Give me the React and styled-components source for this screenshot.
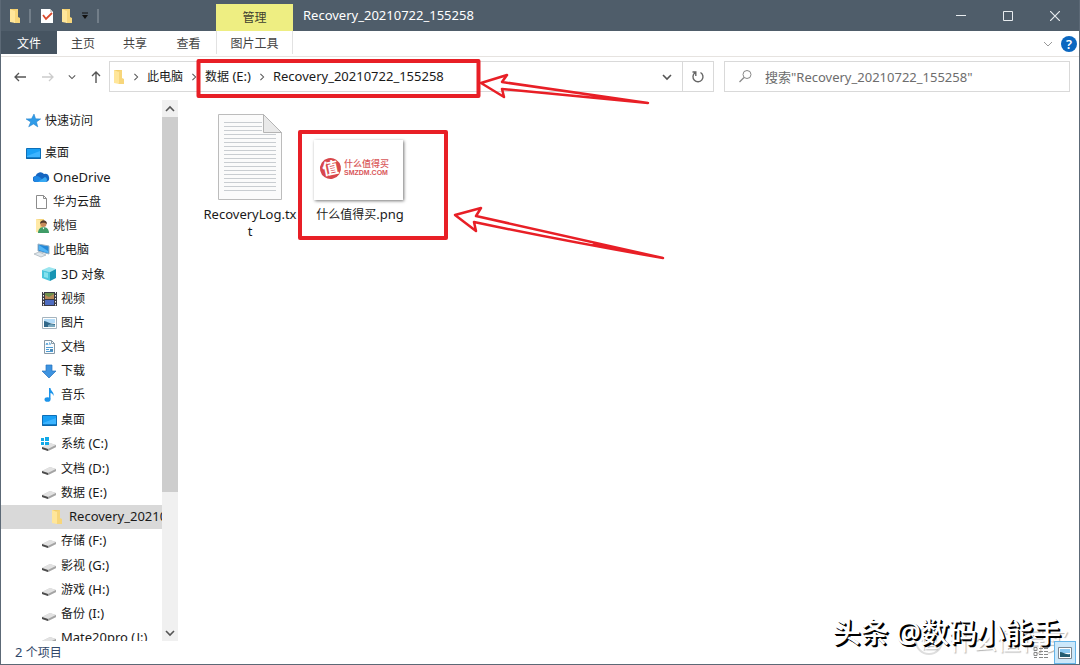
import React, { useState } from "react";
import styled, { createGlobalStyle } from "styled-components";

const GlobalStyle = createGlobalStyle`
  * {
    box-sizing: border-box;
  }
  body {
    margin: 0;
    background: #fff;
  }
  body, button, input {
    font-family: "Noto Sans", "Noto Sans CJK SC", sans-serif;
    font-size: 12px;
    line-height: 16px;
    color: #1a1a1a;
  }
  button {
    padding: 0;
    border: 0;
    background: none;
  }
  a {
    color: inherit;
    text-decoration: none;
  }
  svg {
    display: block;
    flex: none;
  }
`;

const Window = styled.div`
  position: relative;
  display: flex;
  flex-direction: column;
  height: 100vh;
  border: 1px solid #5c6976;
  border-top: 0;
  overflow: hidden;
  background: #fff;
`;

const TitleBar = styled.header`
  display: flex;
  height: 31px;
  padding-right: 1px;
  background: #4f5d6a;
  color: #fff;
`;

const QuickTools = styled.div`
  display: flex;
  align-items: center;
  gap: 4px;
  width: 215px;
  padding-left: 6px;
`;

const Divider = styled.span`
  width: 2px;
  height: 14px;
  margin: 0 4px 0 2px;
  background: #727e89;
`;

const ContextTab = styled.div`
  width: 77px;
  height: 27px;
  margin-top: 4px;
  line-height: 28px;
  text-align: center;
  background: #eeee82;
  color: #3f4030;
`;

const Title = styled.h1`
  flex: 1;
  margin: 0;
  padding-left: 10px;
  font-size: 12px;
  font-weight: 400;
  line-height: 31px;
`;

const WindowButton = styled.button`
  display: flex;
  align-items: center;
  justify-content: center;
  width: 47px;
  color: #e8ecef;
`;

const Ribbon = styled.nav`
  display: flex;
  height: 26px;
  border-bottom: 1px solid #e6e3e0;
`;

const RibbonTab = styled.button`
  width: ${(props) => props.$width || 52}px;
  height: 23px;
  padding-top: 1px;
  line-height: 23px;
  text-align: center;
  color: ${(props) => (props.$file ? "#fff" : "#444")};
  background: ${(props) => (props.$file ? "#465461" : "#fff")};
  border: solid #e2e2e2;
  border-width: ${(props) => (props.$context ? "0 1px" : "0")};
`;

const RibbonEnd = styled.div`
  display: flex;
  align-items: center;
  gap: 8px;
  margin-left: auto;
  padding-right: 2px;
`;

const Help = styled.button`
  width: 16px;
  height: 16px;
  border-radius: 50%;
  background: #0b67c0;
  color: #fff;
  font-size: 13px;
  font-weight: 600;
`;

const AddressRow = styled.div`
  display: flex;
  align-items: center;
  height: 39px;
  padding-right: 9px;
`;

const NavButtons = styled.div`
  display: flex;
  align-items: center;
  justify-content: space-between;
  flex: none;
  width: 108px;
  padding: 0 7px 0 12px;
`;

const AddressBar = styled.div`
  display: flex;
  align-items: center;
  flex: 605 1 605px;
  height: 31px;
  border: 1px solid #d9d9d9;
`;

const Crumbs = styled.div`
  display: flex;
  align-items: center;
  flex: 1;
  padding-left: 1px;
`;

const Crumb = styled.a`
  padding: 0 7px;
  white-space: nowrap;
`;

const CrumbRoot = styled.a`
  padding-right: 5px;
`;

const BarButton = styled.button`
  display: flex;
  align-items: center;
  justify-content: center;
  align-self: stretch;
  width: 31px;
  border-left: ${(props) => (props.$line ? "1px solid #d9d9d9" : "0")};
`;

const Search = styled.label`
  display: flex;
  align-items: center;
  flex: 346 1 346px;
  gap: 12px;
  height: 31px;
  margin-left: 10px;
  padding-left: 13px;
  border: 1px solid #d9d9d9;
`;

const SearchInput = styled.input`
  flex: 1;
  min-width: 0;
  padding: 0;
  border: 0;
  outline: 0;
  font-size: 13px;
  &::placeholder {
    color: #6d6d6d;
    opacity: 1;
  }
`;

const Body = styled.div`
  display: flex;
  flex: 1;
  min-height: 0;
`;

const Sidebar = styled.aside`
  display: flex;
  flex-direction: column;
  width: 161px;
  padding-top: 13px;
  overflow: hidden;
`;

const Tree = styled.ul`
  display: grid;
  flex: 1 0 auto;
  grid-auto-rows: minmax(24px, 1fr);
  margin: 8px 0 -9px;
  padding: 0;
  list-style: none;
`;

const TreeItem = styled.li`
  display: flex;
`;

const TreeLink = styled.a`
  display: flex;
  align-items: center;
  flex: 1 0 auto;
  gap: 3px;
  padding-left: ${(props) => 24 + props.$level * 8}px;
  line-height: 20px;
  white-space: nowrap;
  background: ${(props) => (props.$active ? "#d9d9d9" : "transparent")};
`;

const Quick = styled(TreeLink)`
  flex: none;
  height: 24px;
`;

const ScrollBar = styled.div`
  display: flex;
  flex-direction: column;
  width: 16px;
  margin-top: 4px;
  background: #f0f0f0;
`;

const ScrollButton = styled.button`
  display: flex;
  align-items: center;
  justify-content: center;
  height: 17px;
`;

const ScrollTrack = styled.div`
  flex: 1;
`;

const ScrollThumb = styled.div`
  height: 74%;
  background: #cdcdcd;
`;

const Files = styled.main`
  display: flex;
  align-items: flex-start;
  flex: 1;
  gap: 16px;
  padding: 16px 0 0 25px;
`;

const File = styled.a`
  width: 94px;
  text-align: center;
  word-break: break-all;
`;

const Preview = styled.div`
  display: flex;
  align-items: flex-end;
  justify-content: center;
  height: 89px;
  margin-bottom: 5px;
`;

const Thumb = styled.div`
  display: flex;
  align-items: center;
  gap: 3px;
  width: 89px;
  height: 60px;
  margin: 0 3px 1px 0;
  padding: 0 0 4px 6px;
  background: #fff;
  box-shadow: 1px 1px 3px #777;
  color: #d9575a;
`;

const Seal = styled.span`
  width: 21px;
  height: 21px;
  border-radius: 50%;
  background: #d8474b;
  color: #fff;
  font-size: 16px;
  font-weight: 700;
  line-height: 20px;
  transform: rotate(-12deg);
`;

const Brand = styled.span`
  font-size: 9px;
  font-weight: 500;
  line-height: 9px;
  text-align: left;
  white-space: nowrap;
`;

const BrandUrl = styled.small`
  display: block;
  font-family: "Liberation Sans", sans-serif;
  font-size: 7px;
  font-weight: 700;
`;

const Latin = styled.span`
  font-size: 13px;
`;

const StatusBar = styled.footer`
  position: relative;
  display: flex;
  align-items: center;
  height: 23px;
  padding: 0 3px 0 14px;
  color: #2f4668;
`;

const Views = styled.div`
  display: flex;
  gap: 2px;
  margin-left: auto;
`;

const ViewButton = styled.button`
  display: flex;
  align-items: center;
  justify-content: center;
  width: 22px;
  height: 23px;
  border: 1px solid ${(props) => (props.$active ? "#66b5e8" : "transparent")};
  background: ${(props) => (props.$active ? "#cce8fa" : "transparent")};
`;

const Marks = styled.svg`
  position: absolute;
  left: -1px;
  top: 0;
  pointer-events: none;
`;

const Credit = styled.div`
  position: absolute;
  right: 18px;
  bottom: 12px;
  font-size: 28px;
  font-weight: 500;
  line-height: 40px;
  color: #fff;
  text-shadow: 2px 2px 0 #000, 1px 1px 0 #000;
  white-space: nowrap;
  pointer-events: none;
`;

const Stamp = styled.div`
  position: absolute;
  right: 10px;
  bottom: 7px;
  display: flex;
  align-items: center;
  gap: 6px;
  font-size: 24px;
  line-height: 32px;
  color: #fff;
  text-shadow: 1px 1px 1px #b4b4b4;
  pointer-events: none;
`;

const StampSeal = styled.span`
  width: 28px;
  height: 28px;
  border: 2px solid #dedede;
  border-radius: 50%;
  font-size: 18px;
  line-height: 24px;
  text-align: center;
`;

const Chevron = ({ dir = "down", size = 10, color = "#555", width = 1.3 }) => {
  const paths = {
    down: "M1 3l4 4 4-4",
    up: "M1 7l4-4 4 4",
    right: "M3 1l4 4-4 4",
  };
  return (
    <svg width={size} height={size} viewBox="0 0 10 10">
      <path d={paths[dir]} fill="none" stroke={color} strokeWidth={width} />
    </svg>
  );
};

const FolderShape = () => (
  <>
    <path d="M3 1h8v13H3z" fill="#f3ce69" />
    <path d="M11 9l2 1v5H7V2l4-1z" fill="#f7d67b" />
    <path d="M3 1l5 2v12l-5-1z" fill="#ffe69a" />
  </>
);

const FolderIcon = () => (
  <svg width="16" height="16" viewBox="0 0 16 16">
    <FolderShape />
  </svg>
);

const CheckIcon = () => (
  <svg width="16" height="16" viewBox="0 0 16 16">
    <path d="M2 1h9l3 3v11H2z" fill="#fff" />
    <path d="M11 1v3h3" fill="#d0d0d0" />
    <path d="M4 7l3 4 6-6" fill="none" stroke="#d9492c" strokeWidth="1.8" />
  </svg>
);

const DriveShape = () => (
  <>
    <path d="M1 11l8-4 6 2v2l-8 4-6-2z" fill="#c8c8c8" />
    <path d="M1 11l8-4 6 2-8 4z" fill="#e2e2e2" />
    <path d="M1 11l6 2v2l-6-2z" fill="#4c4c4c" />
    <path d="M7 13l8-4v2l-8 4z" fill="#a4a4a4" />
  </>
);

const shapes = {
  star: (
    <path
      d="M9 1l1.6 4.8 5.1.1-4.2 3 1.3 5-4.3-2.9-4.8 2.8 2-4.8L1 5.900l5.500-.1z"
      fill="#2f9be8"
      stroke="#1d7cc8"
      strokeWidth=".5"
    />
  ),
  desktop: (
    <>
      <path d="M1.500 3.500h14v10h-14z" fill="#19a0f5" stroke="#0d6fb8" />
      <path d="M2 11l13-5v6H2z" fill="#3db4ff" />
      <path d="M1 13h15" stroke="#0b5c9c" />
    </>
  ),
  cloud: (
    <>
      <path d="M3 13a3 3 0 01-.5-6A5 5 0 0111 5a4 4 0 012 8z" fill="#1565c0" />
      <path d="M3.500 13a3 3 0 010-6c1 0 2 .3 3 1l6 5z" fill="#1e88e5" />
      <path d="M5 13l7-5a3 3 0 011 5z" fill="#37a9f2" />
    </>
  ),
  page: (
    <path d="M3.500 1.500h7l3 3v10h-10zM10.500 1.500v3h3" fill="#fff" stroke="#8c8c8c" />
  ),
  user: (
    <>
      <path d="M3 1h8v13H3z" fill="#f3d37c" />
      <path d="M3 1l4 1v13l-4-1z" fill="#ffe9a6" />
      <circle cx="10.500" cy="6" r="3" fill="#c68b5c" />
      <path d="M7 6c0-5 7-5 7 0-2-1-4-2-7 0z" fill="#553c2d" />
      <path d="M5 15c0-8 11-8 11 0z" fill="#3f9c67" />
      <path d="M9.500 9.500l1 2 1-2z" fill="#fff" />
    </>
  ),
  computer: (
    <>
      <path d="M5 2l11 2v8L5 9z" fill="#2389d8" stroke="#9ab2c4" />
      <path d="M6 3l9 6v2L6 8z" fill="#52b4f4" />
      <path d="M1 12l5-2 7 3-5 2z" fill="#dfe6eb" stroke="#a5b0b8" strokeWidth=".7" />
    </>
  ),
  cube: (
    <>
      <path d="M1 4l7-3 7 2-6 3z" fill="#9ae5ef" />
      <path d="M1 4l8 2v9l-8-3z" fill="#4cc6dc" />
      <path d="M9 6l6-3v9l-6 3z" fill="#1794b3" />
      <path d="M3 6l4 1v5l-4-1z" fill="#84e2ee" />
    </>
  ),
  video: (
    <>
      <path d="M1 1h15v14H1z" fill="#3a3a44" />
      <path d="M4 2h9v6H4z" fill="#6c8f4d" />
      <path d="M4 4l4 2 5-3v5H4z" fill="#b88a58" />
      <path d="M4 9h9v5H4z" fill="#4e6cc0" />
      <path d="M2.500 1v14M14.500 1v14" stroke="#f4f4f4" strokeDasharray="1.500 1.500" />
    </>
  ),
  picture: (
    <>
      <path d="M1.500 2.500h14v11h-14z" fill="#fff" stroke="#a5b4be" />
      <path d="M3 4h11v4H3z" fill="#b4dcf8" />
      <path d="M3 6c3 0 5 3 11 3v3H3z" fill="#31688a" />
      <path d="M7 10c2-1 4-1 7 0v2H7z" fill="#79a9bf" />
    </>
  ),
  document: (
    <>
      <path d="M3.500 1.500h7l3 3v10h-10z" fill="#f8fbfd" stroke="#8799a6" />
      <path d="M10.500 1.500v3h3" fill="none" stroke="#8799a6" />
      <path d="M5 6l1-2 1 2M8 4h1v2M5 8.500h7M5 12.500h7M5 10.500h3" fill="none" stroke="#4c9bd3" />
      <path d="M9 10h3v2H9z" fill="#4a89b8" />
    </>
  ),
  download: (
    <path d="M5 2h6v6h4l-7 7-7-7h4z" fill="#3d93e0" stroke="#2673bd" strokeWidth=".7" />
  ),
  music: (
    <>
      <path d="M8 1h1.500c0 3 4 4 3 8-.5-2-2-3-3-3v6H8z" fill="#1c94ea" />
      <ellipse cx="6.500" cy="12.500" rx="3" ry="2.300" fill="#1c94ea" />
    </>
  ),
  system: (
    <>
      <DriveShape />
      <path d="M0 1h8v8H0z" fill="#fff" />
      <path d="M0 2h3v3H0zM4 1h4v4H4zM0 6h3v3H0zM4 6h4v3H4z" fill="#12a9e8" />
    </>
  ),
  drive: <DriveShape />,
  folder: <FolderShape />,
};

const Icon = ({ name }) => (
  <svg width="17" height="16" viewBox="0 0 17 16">
    {shapes[name]}
  </svg>
);

// Latin runs are set one size up so they sit evenly beside the Chinese text
const Text = ({ children }) =>
  children
    .split(/([\x20-\x7e]+)/)
    .map((part, i) => (i % 2 ? <Latin key={i}>{part}</Latin> : part));

const tree = [
  { name: "桌面", icon: "desktop", level: 0 },
  { name: "OneDrive", icon: "cloud", level: 1 },
  { name: "华为云盘", icon: "page", level: 1 },
  { name: "姚恒", icon: "user", level: 1 },
  { name: "此电脑", icon: "computer", level: 1 },
  { name: "3D 对象", icon: "cube", level: 2 },
  { name: "视频", icon: "video", level: 2 },
  { name: "图片", icon: "picture", level: 2 },
  { name: "文档", icon: "document", level: 2 },
  { name: "下载", icon: "download", level: 2 },
  { name: "音乐", icon: "music", level: 2 },
  { name: "桌面", icon: "desktop", level: 2 },
  { name: "系统 (C:)", icon: "system", level: 2 },
  { name: "文档 (D:)", icon: "drive", level: 2 },
  { name: "数据 (E:)", icon: "drive", level: 2 },
  { name: "Recovery_20210722_155258", icon: "folder", level: 3 },
  { name: "存储 (F:)", icon: "drive", level: 2 },
  { name: "影视 (G:)", icon: "drive", level: 2 },
  { name: "游戏 (H:)", icon: "drive", level: 2 },
  { name: "备份 (I:)", icon: "drive", level: 2 },
  { name: "Mate20pro (J:)", icon: "drive", level: 2 },
];

const TextFileIcon = () => (
  <svg width="66" height="88" viewBox="0 0 66 88">
    <path d="M1.500 1.500h45l18 18v67h-63z" fill="#fbfbfb" stroke="#bcbcbc" />
    <path
      d="M7 9.500h38M7 13.500h38M7 17.500h38M7 21.500h52M7 25.500h52M7 29.500h52M7 33.500h52M7 37.500h52M7 41.500h52M7 45.500h52M7 49.500h52M7 53.500h52M7 57.500h52M7 61.500h52M7 65.500h52M7 69.500h52M7 73.500h52M7 77.500h52"
      stroke="#c9cdd1"
    />
    <path d="M46.500 1.500v18h18z" fill="#e9e9e9" stroke="#b4b4b4" />
  </svg>
);

const Arrow = ({ d }) => (
  <path d={d} fill="none" stroke="#e81f26" strokeWidth="2.500" strokeLinejoin="round" />
);

const App = () => {
  const [active, setActive] = useState(15);
  const [query, setQuery] = useState("");

  return (
    <>
      <GlobalStyle />
      <Window>
        <TitleBar>
          <QuickTools>
            <FolderIcon />
            <Divider />
            <CheckIcon />
            <FolderIcon />
            <svg width="12" height="8" viewBox="0 0 12 8">
              <path d="M3 1h6" stroke="#111" />
              <path d="M3 3h6L6 7z" fill="#111" />
            </svg>
            <Divider />
          </QuickTools>
          <ContextTab>管理</ContextTab>
          <Title>
            <Text>Recovery_20210722_155258</Text>
          </Title>
          <WindowButton aria-label="最小化">
            <svg width="10" height="10" viewBox="0 0 10 10">
              <path d="M0 4.500h10" stroke="currentColor" />
            </svg>
          </WindowButton>
          <WindowButton aria-label="最大化">
            <svg width="10" height="10" viewBox="0 0 10 10">
              <path d="M.5.5h9v9h-9z" fill="none" stroke="currentColor" />
            </svg>
          </WindowButton>
          <WindowButton aria-label="关闭">
            <svg width="10" height="10" viewBox="0 0 10 10">
              <path d="M0 0l10 10M10 0L0 10" stroke="currentColor" strokeWidth="1.200" />
            </svg>
          </WindowButton>
        </TitleBar>

        <Ribbon>
          <RibbonTab $file $width={56}>文件</RibbonTab>
          <RibbonTab>主页</RibbonTab>
          <RibbonTab>共享</RibbonTab>
          <RibbonTab $width={55}>查看</RibbonTab>
          <RibbonTab $context $width={77}>图片工具</RibbonTab>
          <RibbonEnd>
            <Chevron color="#999" width={1} />
            <Help aria-label="帮助">?</Help>
          </RibbonEnd>
        </Ribbon>

        <AddressRow>
          <NavButtons>
            <button aria-label="后退">
              <svg width="14" height="12" viewBox="0 0 14 12">
                <path d="M13 6H2M6 2L2 6l4 4" fill="none" stroke="#555" strokeWidth="1.300" />
              </svg>
            </button>
            <button aria-label="前进">
              <svg width="14" height="12" viewBox="0 0 14 12">
                <path d="M1 6h11M8 2l4 4-4 4" fill="none" stroke="#ccc" strokeWidth="1.300" />
              </svg>
            </button>
            <button aria-label="最近浏览的位置">
              <Chevron size={8} />
            </button>
            <button aria-label="向上">
              <svg width="12" height="14" viewBox="0 0 12 14">
                <path d="M6 13V2M2 6l4-4 4 4" fill="none" stroke="#555" strokeWidth="1.400" />
              </svg>
            </button>
          </NavButtons>
          <AddressBar>
            <Crumbs>
              <CrumbRoot href="#root" aria-label="根目录">
                <FolderIcon />
              </CrumbRoot>
              <Chevron dir="right" size={8} />
              <Crumb href="#pc">此电脑</Crumb>
              <Chevron dir="right" size={8} />
              <Crumb href="#e">
                <Text>数据 (E:)</Text>
              </Crumb>
              <Chevron dir="right" size={8} />
              <Crumb href="#recovery">
                <Text>Recovery_20210722_155258</Text>
              </Crumb>
            </Crumbs>
            <BarButton aria-label="以前的位置">
              <Chevron width={1.6} />
            </BarButton>
            <BarButton $line aria-label="刷新">
              <svg width="14" height="14" viewBox="0 0 14 14">
                <path
                  d="M9.500 2.500A5 5 0 114 2.800M4.800 6V2H1.500"
                  fill="none"
                  stroke="#666"
                  strokeWidth="1.400"
                />
              </svg>
            </BarButton>
          </AddressBar>
          <Search>
            <svg width="15" height="15" viewBox="0 0 15 15">
              <circle cx="9" cy="5.500" r="4" fill="none" stroke="#888" />
              <path d="M6 8.500L1.500 13" stroke="#888" strokeWidth="1.200" />
            </svg>
            <SearchInput
              aria-label="搜索"
              value={query}
              placeholder={'搜索"Recovery_20210722_155258"'}
              onChange={(e) => setQuery(e.target.value)}
            />
          </Search>
        </AddressRow>

        <Body>
          <Sidebar>
            <Quick href="#quick" $level={0}>
              <Icon name="star" />
              快速访问
            </Quick>
            <Tree>
              {tree.map((item, i) => (
                <TreeItem key={i}>
                  <TreeLink
                    href="#tree"
                    $level={item.level}
                    $active={active === i}
                    onClick={() => setActive(i)}
                  >
                    <Icon name={item.icon} />
                    <span>
                      <Text>{item.name}</Text>
                    </span>
                  </TreeLink>
                </TreeItem>
              ))}
            </Tree>
          </Sidebar>
          <ScrollBar>
            <ScrollButton aria-label="向上滚动">
              <Chevron dir="up" width={1.6} />
            </ScrollButton>
            <ScrollTrack>
              <ScrollThumb />
            </ScrollTrack>
            <ScrollButton aria-label="向下滚动">
              <Chevron width={1.6} />
            </ScrollButton>
          </ScrollBar>
          <Files>
            <File href="#log">
              <Preview>
                <TextFileIcon />
              </Preview>
              <Text>RecoveryLog.txt</Text>
            </File>
            <File href="#png">
              <Preview>
                <Thumb>
                  <Seal>值</Seal>
                  <Brand>
                    什么值得买
                    <BrandUrl>SMZDM.COM</BrandUrl>
                  </Brand>
                </Thumb>
              </Preview>
              <Text>什么值得买.png</Text>
            </File>
          </Files>
        </Body>

        <Stamp>
          <StampSeal>值</StampSeal>
          什么值得买
        </Stamp>

        <StatusBar>
          <span>
            <Text>2 个项目</Text>
          </span>
          <Views>
            <ViewButton aria-label="详细信息">
              <svg width="16" height="14" viewBox="0 0 16 14">
                <path
                  d="M1 1.500h3v3H1zM1 6.500h3v3H1zM1 11.500h3M6 2.500h4M11 2.500h4M6 5.500h4M11 5.500h4M6 8.500h4M11 8.500h4M6 11.500h4M11 11.500h4"
                  fill="none"
                  stroke="#888"
                />
              </svg>
            </ViewButton>
            <ViewButton $active aria-label="大缩略图">
              <svg width="14" height="12" viewBox="0 0 14 12">
                <path d="M.5.5h13v11H.5z" fill="#fff" stroke="#7d8790" />
                <path d="M2 2h10v4H2z" fill="#8ccaf2" />
                <path d="M2 5c3 0 5 3 10 2v3H2z" fill="#255c70" />
              </svg>
            </ViewButton>
          </Views>
        </StatusBar>

        <Credit>头条 @数码小能手</Credit>
        <Marks width="680" height="270" viewBox="0 0 680 270">
          <g fill="none" stroke="#e81f26" strokeWidth="4" strokeLinejoin="round">
            <rect x="198.500" y="61" width="280" height="35" />
            <rect x="300" y="132" width="146" height="106" />
          </g>
          <Arrow d="M648 103L502 82l5-7-26 8 23 14-2-8q70 7 146 14l-50-6" />
          <Arrow d="M663 258L476 216l5-8-26 7 21 16-2-9q90 19 189 36l-70-15" />
        </Marks>
      </Window>
    </>
  );
};

export default App;
